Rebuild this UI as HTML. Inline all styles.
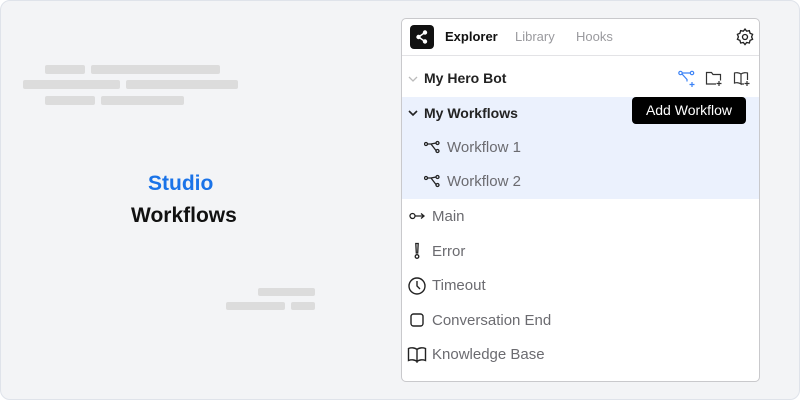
<!DOCTYPE html>
<html><head><style>
*{margin:0;padding:0;box-sizing:border-box}
body{width:800px;height:400px;background:#fff;font-family:"Liberation Sans",sans-serif;position:relative;overflow:hidden}
.outer{position:absolute;left:0;top:0;width:800px;height:400px;background:#f3f4f6;border:1px solid #dfe3ea;border-radius:10px}
.bar{position:absolute;height:9px;background:#dcdcdc;border-radius:2px}
.panel{position:absolute;left:401px;top:18px;width:359px;height:364px;background:#fff;border:1px solid #c9c9cc;border-radius:5px;overflow:hidden}
.t{position:absolute;font-size:15px;white-space:nowrap}
svg{position:absolute}
</style></head><body>
<div class="outer"></div>
<div class="bar" style="left:45px;top:65px;width:40px"></div>
<div class="bar" style="left:91px;top:65px;width:129px"></div>
<div class="bar" style="left:23px;top:80px;width:97px"></div>
<div class="bar" style="left:126px;top:80px;width:112px"></div>
<div class="bar" style="left:45px;top:96px;width:50px"></div>
<div class="bar" style="left:101px;top:96px;width:83px"></div>
<div class="bar" style="left:258px;top:288px;width:57px;height:8px"></div>
<div class="bar" style="left:226px;top:302px;width:59px;height:8px"></div>
<div class="bar" style="left:291px;top:302px;width:24px;height:8px"></div>
<div class="t" style="left:148px;top:172px;font-size:21px;font-weight:bold;color:#1a73e8">Studio</div>
<div class="t" style="left:131px;top:204px;font-size:21px;font-weight:bold;color:#111">Workflows</div>

<div class="panel">
 <div style="position:absolute;left:0;top:0;width:100%;height:37px;border-bottom:1px solid #e3e3e6"></div>
 <div style="position:absolute;left:8px;top:6px;width:24px;height:24px;background:#111;border-radius:4px"></div>
 <svg style="left:8px;top:6px" width="24" height="24" viewBox="0 0 24 24"><g fill="#fff"><circle cx="15" cy="7.5" r="2.2"/><circle cx="8.5" cy="12" r="2.2"/><circle cx="15" cy="16.5" r="2.2"/></g><path d="M15 7.5 8.5 12 15 16.5" stroke="#fff" stroke-width="1.5" fill="none"/></svg>
 <div class="t" style="left:43px;top:10px;font-size:13px;font-weight:bold;color:#111">Explorer</div>
 <div class="t" style="left:113px;top:10px;font-size:13px;color:#9a9a9e">Library</div>
 <div class="t" style="left:174px;top:10px;font-size:13px;color:#9a9a9e">Hooks</div>
 <svg style="left:333px;top:8px" width="20" height="20" viewBox="0 0 24 24" fill="none" stroke="#222" stroke-width="1.6"><circle cx="12" cy="12" r="3"/><path d="M12 2.5l2 2.5 3.2-.6.9 3.1 3 1.3-1.2 3 1.2 3-3 1.3-.9 3.1-3.2-.6-2 2.5-2-2.5-3.2.6-.9-3.1-3-1.3 1.2-3-1.2-3 3-1.3.9-3.1 3.2.6z"/></svg>

 <svg style="left:5px;top:54px" width="12" height="12" viewBox="0 0 12 12" fill="none" stroke="#bbb" stroke-width="1.3"><path d="M2 4l4 4 4-4"/></svg>
 <div class="t" style="left:22px;top:51px;font-size:14px;font-weight:bold;color:#222">My Hero Bot</div>
 <svg style="left:276px;top:51px" width="18" height="18" viewBox="0 0 18 18" fill="none" stroke="#3b82f6" stroke-width="1.2"><circle cx="2.5" cy="3" r="1.7"/><circle cx="14" cy="3" r="1.7"/><path d="M4.2 3h8M4 4l5 5.5v2"/><path d="M14 12v5M11.5 14.5h5"/></svg>
 <svg style="left:303px;top:51px" width="18" height="18" viewBox="0 0 18 18" fill="none" stroke="#333" stroke-width="1.2"><path d="M11 14H1.5V2.5h5l1.5 2h7.5v6"/><path d="M14 11v5M11.5 13.5h5"/></svg>
 <svg style="left:331px;top:51px" width="18" height="18" viewBox="0 0 18 18" fill="none" stroke="#333" stroke-width="1.2"><path d="M8 4C6 2.5 3 2.5 1.5 3v10c1.5-.5 4.5-.5 6.5 1V4zM8 4c2-1.5 5-1.5 6.5-1v7M8 14h3"/><path d="M14 11v5M11.5 13.5h5"/></svg>

 <div style="position:absolute;left:0;top:78px;width:100%;height:102px;background:#ebf1fd"></div>
 <svg style="left:5px;top:88px" width="12" height="12" viewBox="0 0 12 12" fill="none" stroke="#222" stroke-width="1.6"><path d="M2 4l4 4 4-4"/></svg>
 <div class="t" style="left:22px;top:86px;font-size:14px;font-weight:bold;color:#222">My Workflows</div>
 <div style="position:absolute;left:230px;top:78px;width:114px;height:27px;background:#000;border-radius:4px;color:#fff;font-size:14px;line-height:27px;text-align:center">Add Workflow</div>

 <svg style="left:22px;top:121px" width="16" height="14" viewBox="0 0 16 14" fill="none" stroke="#222" stroke-width="1.3"><circle cx="2" cy="4" r="1.5"/><circle cx="13.5" cy="3" r="1.5"/><circle cx="13.5" cy="11" r="1.5"/><path d="M3.5 4h3.5l5-1M7 4l5 6.5"/></svg>
 <div class="t" style="left:45px;top:120px;color:#6b6b70">Workflow 1</div>
 <svg style="left:22px;top:155px" width="16" height="14" viewBox="0 0 16 14" fill="none" stroke="#222" stroke-width="1.3"><circle cx="2" cy="4" r="1.5"/><circle cx="13.5" cy="3" r="1.5"/><circle cx="13.5" cy="11" r="1.5"/><path d="M3.5 4h3.5l5-1M7 4l5 6.5"/></svg>
 <div class="t" style="left:45px;top:154px;color:#6b6b70">Workflow 2</div>

 <svg style="left:7px;top:191px" width="18" height="12" viewBox="0 0 18 12" fill="none" stroke="#222" stroke-width="1.3"><circle cx="3.5" cy="6" r="2.5"/><path d="M6 6h9M12 3.5l3 2.5-3 2.5"/></svg>
 <div class="t" style="left:30px;top:189px;color:#6b6b70">Main</div>
 <svg style="left:8px;top:223px" width="14" height="18" viewBox="0 0 14 18" fill="none" stroke="#222" stroke-width="1.3"><path d="M5.8 1.5h2.4l-.5 9.5h-1.4z"/><circle cx="7" cy="14.5" r="1.8"/></svg>
 <div class="t" style="left:30px;top:224px;color:#6b6b70">Error</div>
 <svg style="left:5px;top:257px" width="20" height="20" viewBox="0 0 20 20" fill="none" stroke="#222" stroke-width="1.4"><circle cx="10" cy="10" r="8"/><path d="M10 5v5l3 3"/></svg>
 <div class="t" style="left:30px;top:258px;color:#6b6b70">Timeout</div>
 <svg style="left:7px;top:293px" width="16" height="16" viewBox="0 0 16 16" fill="none" stroke="#222" stroke-width="1.4"><rect x="2" y="2" width="12" height="12" rx="2.5"/></svg>
 <div class="t" style="left:30px;top:293px;color:#6b6b70">Conversation End</div>
 <svg style="left:5px;top:327px" width="20" height="17" viewBox="0 0 20 17" fill="none" stroke="#222" stroke-width="1.4"><path d="M10 3.5C8 1.5 4 1.5 1.5 2.5v12c2.5-1 6.5-1 8.5 1zM10 3.5c2-2 6-2 8.5-1v12c-2.5-1-6.5-1-8.5 1z"/></svg>
 <div class="t" style="left:30px;top:327px;color:#6b6b70">Knowledge Base</div>
</div>
</body></html>
